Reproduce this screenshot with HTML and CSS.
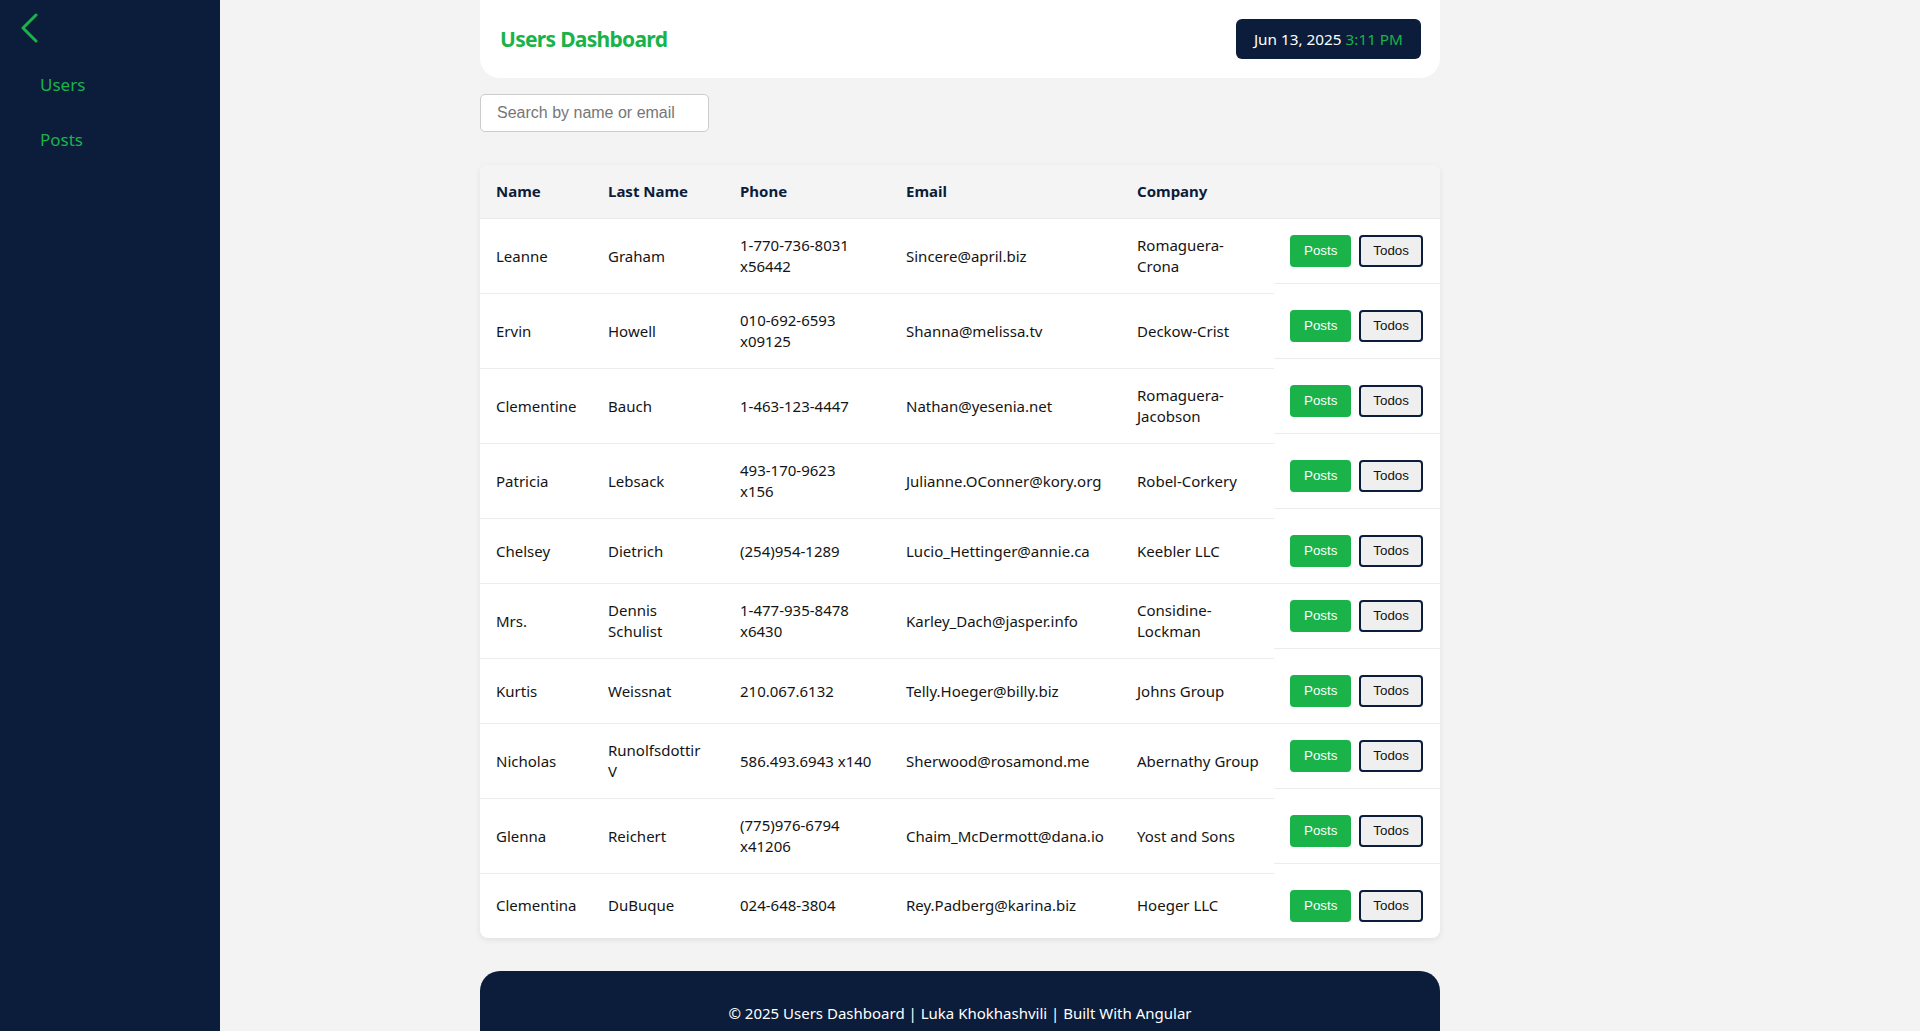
FILE: index.html
```html
<!DOCTYPE html>
<html lang="en">
<head>
<meta charset="utf-8">
<title>Users Dashboard</title>
<link rel="stylesheet" href="styles.css">
</head>
<body>
<div class="layout">
  <aside class="sidebar">
    <button class="collapse" aria-label="Collapse">
      <svg width="20" height="30" viewBox="0 0 20 30"><polyline points="16,2 3,15 16,28" fill="none" stroke="#19b34a" stroke-width="3" stroke-linecap="round" stroke-linejoin="round"/></svg>
    </button>
    <nav class="nav">
      <a class="nav-link" href="#">Users</a>
      <a class="nav-link" href="#">Posts</a>
    </nav>
  </aside>
  <main class="main">
    <div class="container">
      <header class="header-card">
        <h1 class="title">Users Dashboard</h1>
        <div class="clock">Jun 13, 2025 <span class="time">3:11 PM</span></div>
      </header>
      <div class="search-row">
        <input class="search" type="text" placeholder="Search by name or email">
      </div>
      <div class="table-card">
        <table class="users">
          <colgroup>
            <col class="c-name"><col class="c-last"><col class="c-phone"><col class="c-email"><col class="c-company"><col class="c-actions">
          </colgroup>
          <thead>
            <tr><th>Name</th><th>Last Name</th><th>Phone</th><th>Email</th><th>Company</th><th></th></tr>
          </thead>
          <tbody>
            <tr><td>Leanne</td><td>Graham</td><td>1-770-736-8031 x56442</td><td>Sincere@april.biz</td><td>Romaguera-Crona</td><td class="actions"><button class="btn-posts">Posts</button><button class="btn-todos">Todos</button></td></tr>
            <tr><td>Ervin</td><td>Howell</td><td>010-692-6593 x09125</td><td>Shanna@melissa.tv</td><td>Deckow-Crist</td><td class="actions"><button class="btn-posts">Posts</button><button class="btn-todos">Todos</button></td></tr>
            <tr><td>Clementine</td><td>Bauch</td><td>1-463-123-4447</td><td>Nathan@yesenia.net</td><td>Romaguera-Jacobson</td><td class="actions"><button class="btn-posts">Posts</button><button class="btn-todos">Todos</button></td></tr>
            <tr><td>Patricia</td><td>Lebsack</td><td>493-170-9623<br>x156</td><td>Julianne.OConner@kory.org</td><td>Robel-Corkery</td><td class="actions"><button class="btn-posts">Posts</button><button class="btn-todos">Todos</button></td></tr>
            <tr><td>Chelsey</td><td>Dietrich</td><td>(254)954-1289</td><td>Lucio_Hettinger@annie.ca</td><td>Keebler LLC</td><td class="actions"><button class="btn-posts">Posts</button><button class="btn-todos">Todos</button></td></tr>
            <tr><td>Mrs.</td><td>Dennis Schulist</td><td>1-477-935-8478 x6430</td><td>Karley_Dach@jasper.info</td><td>Considine-Lockman</td><td class="actions"><button class="btn-posts">Posts</button><button class="btn-todos">Todos</button></td></tr>
            <tr><td>Kurtis</td><td>Weissnat</td><td>210.067.6132</td><td>Telly.Hoeger@billy.biz</td><td>Johns Group</td><td class="actions"><button class="btn-posts">Posts</button><button class="btn-todos">Todos</button></td></tr>
            <tr><td>Nicholas</td><td>Runolfsdottir V</td><td>586.493.6943 x140</td><td>Sherwood@rosamond.me</td><td class="nowrap">Abernathy Group</td><td class="actions"><button class="btn-posts">Posts</button><button class="btn-todos">Todos</button></td></tr>
            <tr><td>Glenna</td><td>Reichert</td><td>(775)976-6794 x41206</td><td>Chaim_McDermott@dana.io</td><td>Yost and Sons</td><td class="actions"><button class="btn-posts">Posts</button><button class="btn-todos">Todos</button></td></tr>
            <tr><td>Clementina</td><td>DuBuque</td><td>024-648-3804</td><td>Rey.Padberg@karina.biz</td><td>Hoeger LLC</td><td class="actions"><button class="btn-posts">Posts</button><button class="btn-todos">Todos</button></td></tr>
          </tbody>
        </table>
      </div>
      <footer class="footer">© 2025 Users Dashboard | Luka Khokhashvili | Built With Angular</footer>
    </div>
  </main>
</div>
</body>
</html>
```
FILE: styles.css
```css
* { box-sizing: border-box; }
body {
  margin: 0;
  background: #f3f3f3;
  font-family: "Noto Sans", "Open Sans", sans-serif;
  color: #141414;
}
.layout {
  display: flex;
  min-height: 100vh;
}
.sidebar {
  width: 220px;
  flex-shrink: 0;
  background: #0b1d3a;
  padding: 13px 0 0 0;
}
.collapse {
  display: block;
  background: none;
  border: 0;
  padding: 0;
  margin: 0 0 0 20px;
  width: 20px;
  height: 30px;
  cursor: pointer;
}
.collapse svg { display: block; }
.nav {
  display: flex;
  flex-direction: column;
  gap: 29px;
  padding: 29px 0 0 40px;
}
.nav-link {
  color: #19b34a;
  text-decoration: none;
  font-size: 17px;
  line-height: 26px;
}
.main {
  flex: 1;
  padding-right: 220px;
}
.container {
  width: 960px;
  margin: 0 auto;
}
.header-card {
  height: 78px;
  background: #fff;
  border-radius: 0 0 20px 20px;
  display: flex;
  align-items: center;
  justify-content: space-between;
  padding: 0 19px 0 20px;
}
.title {
  margin: 0;
  font-size: 21px;
  letter-spacing: -0.7px;
  font-weight: 700;
  color: #19b34a;
}
.clock {
  background: #0b1d3a;
  color: #fff;
  font-size: 15.3px;
  line-height: 20px;
  padding: 10px 18px;
  border-radius: 6px;
}
.time { color: #19b34a; }
.search-row {
  margin-top: 16px;
}
.search {
  width: 229px;
  height: 38px;
  border: 1px solid #ccc;
  border-radius: 5px;
  padding: 0 16px;
  font-family: "Liberation Sans", Arial, sans-serif;
  font-size: 16px;
  background: #fff;
}
.search::placeholder { color: #767676; }
.table-card {
  margin-top: 33px;
  background: #fff;
  border-radius: 8px;
  box-shadow: 0 2px 6px rgba(0,0,0,0.08);
  overflow: hidden;
}
.users {
  width: 100%;
  border-collapse: collapse;
  table-layout: fixed;
  font-size: 15px;
  line-height: 21px;
}
.c-name { width: 112px; }
.c-last { width: 132px; }
.c-phone { width: 166px; }
.c-email { width: 231px; }
.c-company { width: 153px; }
.c-actions { width: 166px; }
.users th {
  text-align: left;
  padding: 16px;
  background: #f4f4f4;
  color: #0b1d3a;
  font-weight: 700;
  border-bottom: 1px solid #e9e9e9;
}
.users td {
  padding: 16px;
  border-bottom: 1px solid #ececec;
  vertical-align: middle;
}
.users td.nowrap { white-space: nowrap; }
.users tbody tr:last-child td { border-bottom: 0; }
.users td.actions {
  display: flex;
  gap: 8px;
}
.btn-posts, .btn-todos {
  font-family: "Liberation Sans", Arial, sans-serif;
  font-size: 13.33px;
  padding: 6px 12px;
  border-radius: 4px;
  cursor: pointer;
  line-height: 16px;
}
.btn-posts {
  background: #19b34a;
  border: 2px solid #19b34a;
  color: #fff;
}
.btn-todos {
  background: #efefef;
  border: 2px solid #0b1d3a;
  color: #111;
}
.footer {
  margin-top: 33px;
  background: #0b1d3a;
  color: #fff;
  border-radius: 20px 20px 0 0;
  text-align: center;
  padding: 32px 0;
  font-size: 15px;
  line-height: 21px;
}
```
